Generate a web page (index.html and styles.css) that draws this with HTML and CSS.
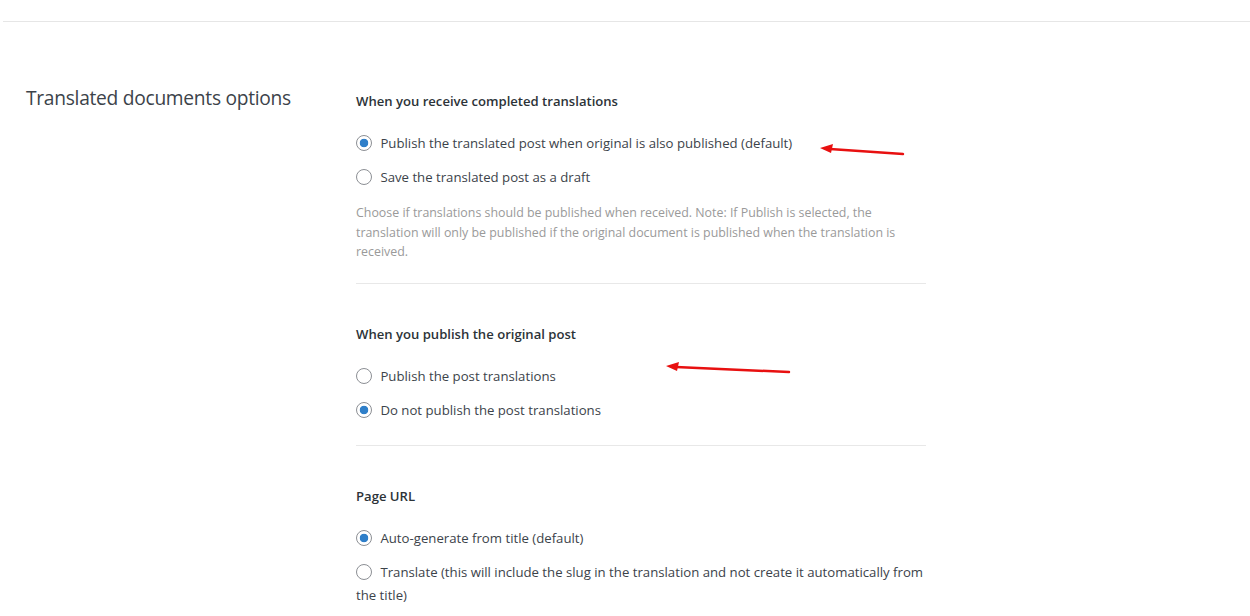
FILE: index.html
```html
<!DOCTYPE html>
<html lang="en">

<head>
    <meta charset="UTF-8">
    <meta name="viewport" content="width=device-width, initial-scale=1.0">
    <title>Translated documents options</title>
    <link rel="stylesheet" href="styles.css">
</head>

<body>
    <div class="topline"></div>

    <div class="settings">
        <h2 class="section-title">Translated documents options</h2>

        <div class="options">
            <div class="group">
                <h4 class="group-title">When you receive completed translations</h4>
                <label class="choice"><input type="radio" name="receive" checked> Publish the translated post when original is also published (default)</label>
                <label class="choice"><input type="radio" name="receive"> Save the translated post as a draft</label>
                <p class="hint">Choose if translations should be published when received. Note: If Publish is selected, the translation will only be published if the original document is published when the translation is received.</p>
            </div>

            <div class="group">
                <h4 class="group-title">When you publish the original post</h4>
                <label class="choice"><input type="radio" name="publish"> Publish the post translations</label>
                <label class="choice"><input type="radio" name="publish" checked> Do not publish the post translations</label>
            </div>

            <div class="group last">
                <h4 class="group-title">Page URL</h4>
                <label class="choice"><input type="radio" name="slug" checked> Auto-generate from title (default)</label>
                <label class="choice"><input type="radio" name="slug"> Translate (this will include the slug in the translation and not create it automatically from the title)</label>
            </div>
        </div>
    </div>

    <!-- annotation arrows -->
    <svg class="arrow arrow-one" width="86" height="14" viewBox="0 0 86 14">
        <line x1="10" y1="4" x2="83" y2="9" stroke="#e81010" stroke-width="2.5" stroke-linecap="round" />
        <polygon points="0,3 13,-1 11,8" fill="#e81010" />
    </svg>
    <svg class="arrow arrow-two" width="126" height="14" viewBox="0 0 126 14">
        <line x1="10" y1="4" x2="123" y2="9" stroke="#e81010" stroke-width="2.5" stroke-linecap="round" />
        <polygon points="0,3 13,-1 11,8" fill="#e81010" />
    </svg>
</body>

</html>
```

FILE: styles.css
```css
body {
    margin: 0;
    padding: 0;
    background-color: #fff;
    font-family: "Open Sans", "Noto Sans", sans-serif;
    color: #2c3338;
}

.topline {
    height: 21px;
    margin-left: 3px;
    border-bottom: 1px solid #e6e6e6;
}

.settings {
    display: flex;
    padding-top: 65px;
}

.section-title {
    width: 330px;
    margin: 0;
    padding-left: 26px;
    font-size: 19.2px;
    font-weight: 400;
    color: #3c434a;
    line-height: 22px;
    letter-spacing: -0.28px;
}

.options {
    width: 570px;
    padding-top: 4px;
}

.group {
    border-bottom: 1px solid #e8e8e8;
    padding-bottom: 23px;
    margin-bottom: 40px;
}

.group.last {
    border-bottom: none;
    padding-bottom: 0;
    margin-bottom: 0;
}

.group-title {
    margin: 0 0 21px 0;
    font-size: 13.1px;
    font-weight: 600;
    color: #2c3338;
    line-height: 20px;
}

.choice {
    display: block;
    font-size: 13.2px;
    line-height: 23px;
    color: #3c434a;
}

.choice + .choice {
    margin-top: 11px;
}

.choice input {
    appearance: none;
    -webkit-appearance: none;
    width: 16px;
    height: 16px;
    margin: 0 5px 0 0;
    border: 1px solid #8c8f94;
    border-radius: 50%;
    vertical-align: -3px;
    box-sizing: border-box;
    background-color: #fff;
}

.choice input:checked {
    background-image: radial-gradient(circle, #2f7fc9 0, #2f7fc9 4px, transparent 4.6px);
}

.hint {
    margin: 14px 0 -2px 0;
    font-size: 12.4px;
    line-height: 19.5px;
    color: #9a9a9a;
}

.arrow {
    position: absolute;
    overflow: visible;
}

.arrow-one {
    left: 820px;
    top: 145px;
}

.arrow-two {
    left: 666px;
    top: 363px;
}
```
